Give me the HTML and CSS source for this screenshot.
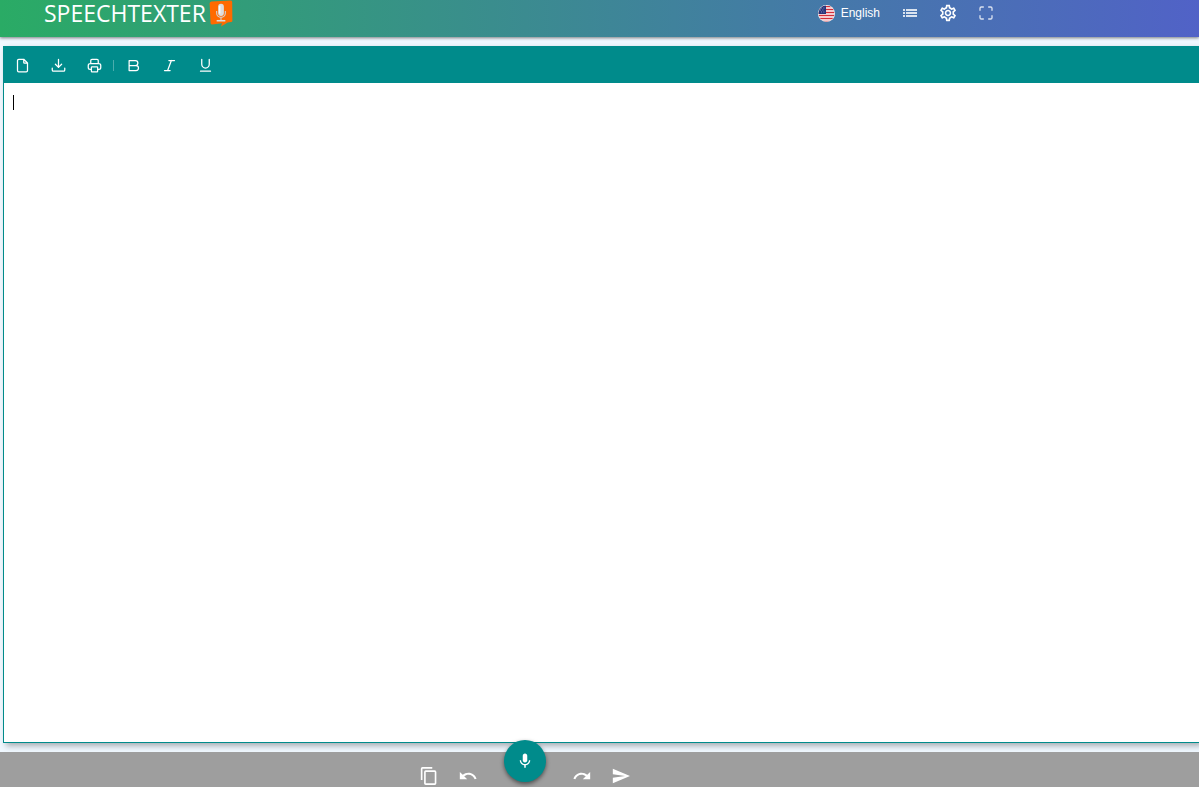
FILE: index.html
```html
<!DOCTYPE html>
<html lang="en">
<head>
  <meta charset="UTF-8" />
  <meta name="viewport" content="width=device-width, initial-scale=1.0"/>
  <title>SpeechTexter</title>
  <link rel="stylesheet" href="styles.css">
</head>
<body>
  <header class="header">
    <a class="logo" href="#">
      <span>SPEECHTEXTER</span>
      <svg class="logo-mark" viewBox="0 0 24 28" aria-hidden="true">
        <path d="M2 1.500 22 .6Q23.500.6 23.600 2L23.800 21.500Q23.800 22.700 22.500 22.900L19 23.400 12 27.600 13 24.200 3 25.300Q1.300 25.300 1.200 24L.2 3.500Q.2 1.800 2 1.500Z" fill="#ff6a00"/>
        <path d="M7.500 11.500v2a4.500 4.500 0 0 0 9 0v-2M12 18v3" fill="none" stroke="#d5cfcb" stroke-width="1.200"/>
        <rect x="9" y="4" width="6" height="12.500" rx="3" fill="#ddd"/>
        <path d="M10.700 6v8" stroke="#fff" stroke-width="1.200"/>
        <path d="M7.500 21.500h9" stroke="#ddd" stroke-width="1.600"/>
      </svg>
    </a>
    <nav class="nav">
      <button class="language" type="button">
        <svg width="17" height="17" viewBox="0 0 17 17" aria-hidden="true">
          <clipPath id="flag"><circle cx="8.500" cy="8.500" r="8"/></clipPath>
          <circle cx="8.500" cy="8.500" r="8.500" fill="#fff"/>
          <g clip-path="url(#flag)">
            <path d="M0 1.500h17M0 4.500h17M0 7.500h17M0 10.500h17M0 13.500h17M0 16.500h17" stroke="#d32f3a" stroke-width="1.300"/>
            <path d="M0 0h8v9H0z" fill="#27357a"/>
            <path d="M3 3h.8M5.500 3h.8M2 5h.8M4.500 5h.8M3 7h.8M5.500 7h.8" stroke="#b7c0e2" stroke-width=".8"/>
          </g>
        </svg>
        <span>English</span>
      </button>
      <button class="nav-button list" type="button" aria-label="Commands">
        <svg width="14" height="8" viewBox="0 0 14 8" fill="#fff"><path d="M0 0h2v2H0zM3 0h11v2H3zM0 3h2v2H0zM3 3h11v2H3zM0 6h2v2H0zM3 6h11v2H3z"/></svg>
      </button>
      <button class="nav-button" type="button" aria-label="Settings">
        <svg width="18" height="18" viewBox="1 1 22 22" fill="#fff">
          <path d="M19.430 12.980c.04-.32.070-.64.070-.98 0-.34-.03-.66-.07-.98l2.110-1.650c.19-.15.240-.42.120-.64l-2-3.460c-.09-.16-.26-.25-.44-.25-.06 0-.12.010-.17.030l-2.490 1c-.52-.4-1.080-.73-1.690-.98l-.38-2.650C14.460 2.180 14.250 2 14 2h-4c-.25 0-.46.180-.49.420l-.38 2.650c-.61.250-1.170.590-1.690.980l-2.490-1c-.06-.02-.12-.03-.18-.03-.17 0-.34.090-.43.250l-2 3.460c-.13.220-.07.490.120.640l2.110 1.650c-.04.320-.07.650-.07.980 0 .33.030.66.070.980l-2.110 1.650c-.19.150-.24.420-.12.640l2 3.460c.09.160.26.250.44.250.06 0 .12-.01.17-.03l2.490-1c.52.400 1.080.730 1.690.980l.38 2.650c.03.240.24.420.49.420h4c.25 0 .46-.18.49-.42l.38-2.650c.61-.25 1.170-.59 1.690-.98l2.490 1c.06.020.12.030.18.030.17 0 .34-.09.430-.25l2-3.460c.12-.22.070-.49-.12-.64l-2.110-1.650zm-1.980-1.710c.04.310.050.520.050.730s-.02.430-.05.730l-.14 1.130.89.700 1.080.84-.7 1.210-1.270-.51-1.040-.42-.9.680c-.43.320-.84.560-1.250.730l-1.060.43-.16 1.130-.2 1.350h-1.400l-.19-1.350-.16-1.130-1.060-.43c-.43-.18-.83-.41-1.230-.71l-.91-.7-1.060.43-1.270.51-.7-1.210 1.080-.84.89-.7-.14-1.130c-.03-.31-.05-.54-.05-.74s.02-.43.050-.73l.14-1.130-.89-.7-1.080-.84.7-1.210 1.270.51 1.040.42.900-.68c.43-.32.840-.56 1.250-.73l1.060-.43.160-1.130.2-1.350h1.390l.19 1.350.16 1.130 1.060.43c.43.180.83.410 1.230.71l.91.700 1.060-.43 1.270-.51.700 1.210-1.070.85-.89.700.140 1.130zM12 8c-2.210 0-4 1.790-4 4s1.790 4 4 4 4-1.790 4-4-1.790-4-4-4zm0 6c-1.100 0-2-.9-2-2s.9-2 2-2 2 .9 2 2-.9 2-2 2z"/>
        </svg>
      </button>
      <button class="nav-button soft" type="button" aria-label="Full screen">
        <svg class="line" width="16" height="16" viewBox="0 0 24 24"><path d="M3 8V5a2 2 0 0 1 2-2h3M16 3h3a2 2 0 0 1 2 2v3M21 16v3a2 2 0 0 1-2 2h-3M8 21H5a2 2 0 0 1-2-2v-3"/></svg>
      </button>
    </nav>
  </header>

  <main class="editor">
    <div class="toolbar">
      <button class="tool" type="button" aria-label="New document">
        <svg class="line" width="15" height="15" viewBox="0 0 24 24"><path d="M14 2v5a1 1 0 0 0 1 1h5M18 22H6a2 2 0 0 1-2-2V4a2 2 0 0 1 2-2h8l6 6v12a2 2 0 0 1-2 2z"/></svg>
      </button>
      <button class="tool" type="button" aria-label="Download">
        <svg class="line" width="15" height="15" viewBox="0 0 24 24"><path d="M2 16v3a2 2 0 0 0 2 2h16a2 2 0 0 0 2-2v-3M7 10l5 5 5-5M12 2v13"/></svg>
      </button>
      <button class="tool" type="button" aria-label="Print">
        <svg class="line" width="15" height="15" viewBox="0 0 24 24"><path d="M17 18h2a3 3 0 0 0 3-3v-3a3 3 0 0 0-3-3H5a3 3 0 0 0-3 3v3a3 3 0 0 0 3 3h2M18 9V4a2 2 0 0 0-2-2H8a2 2 0 0 0-2 2v5"/><rect x="7" y="14" width="10" height="8" rx="1"/></svg>
      </button>
      <span class="divider"></span>
      <button class="tool" type="button" aria-label="Bold">
        <svg class="line" width="15" height="15" viewBox="0 0 24 24"><path d="M5 4h10a4 4 0 0 1 0 8H5zM5 12h11a4 4 0 0 1 0 8H5z"/></svg>
      </button>
      <button class="tool" type="button" aria-label="Italic">
        <svg class="line" width="15" height="15" viewBox="0 0 24 24"><path d="M11 4h9M4 20h9M15 4 9 20"/></svg>
      </button>
      <button class="tool" type="button" aria-label="Underline">
        <svg class="line" width="15" height="15" viewBox="0 0 24 24"><path d="M6 2v8a6 6 0 0 0 12 0V2M4 21h16"/></svg>
      </button>
    </div>
    <div class="page">
      <textarea class="text" aria-label="Text"></textarea>
      <span class="caret"></span>
    </div>
  </main>

  <footer class="footer">
    <div class="actions">
      <button class="action" type="button" aria-label="Copy">
        <svg width="18" height="18" viewBox="1 1 22 22" fill="#fff"><path d="M16 1H4a2 2 0 0 0-2 2v14h2V3h12V1zm3 4H8a2 2 0 0 0-2 2v14c0 1.100.9 2 2 2h11a2 2 0 0 0 2-2V7a2 2 0 0 0-2-2zm0 16H8V7h11v14z"/></svg>
      </button>
      <button class="action" type="button" aria-label="Undo">
        <svg width="18" height="18" viewBox="1 1 22 22" fill="#fff"><path d="M12.500 8c-2.650 0-5.050.99-6.900 2.600L2 7v9h9l-3.620-3.620c1.390-1.160 3.160-1.880 5.120-1.880 3.540 0 6.550 2.310 7.600 5.500l2.370-.78C21.080 11.030 17.150 8 12.500 8z"/></svg>
      </button>
      <span class="mic-space">
        <button class="mic" type="button" aria-label="Start dictation">
          <svg width="18" height="18" viewBox="0 0 24 24" fill="#fff"><path d="M12 14c1.660 0 3-1.340 3-3V5c0-1.660-1.340-3-3-3S9 3.340 9 5v6c0 1.660 1.340 3 3 3zm5.300-3c0 3-2.540 5.100-5.300 5.100S6.700 14 6.700 11H5c0 3.410 2.720 6.230 6 6.720V21h2v-3.280c3.280-.48 6-3.300 6-6.720h-1.700z"/></svg>
        </button>
      </span>
      <button class="action" type="button" aria-label="Redo">
        <svg width="18" height="18" viewBox="1 1 22 22" fill="#fff"><path d="M18.400 10.600C16.550 8.990 14.150 8 11.500 8c-4.650 0-8.580 3.030-9.960 7.220L3.900 16c1.050-3.190 4.050-5.500 7.600-5.500 1.950 0 3.730.72 5.120 1.880L13 16h9V7l-3.600 3.600z"/></svg>
      </button>
      <button class="action" type="button" aria-label="Send">
        <svg width="18" height="18" viewBox="1 1 22 22" fill="#fff"><path d="M2 21 23 12 2 3v7l15 2-15 2z"/></svg>
      </button>
    </div>
  </footer>
</body>
</html>
```
FILE: styles.css
```css
* { box-sizing: border-box; }
body { margin: 0; height: 100vh; display: flex; flex-direction: column; overflow: hidden; background: #f0f8ff; font-family: "Liberation Sans", Arial, sans-serif; }
button { display: flex; align-items: center; justify-content: center; padding: 0; border: none; background: none; color: white; cursor: pointer; }
svg { display: block; }
.line { fill: none; stroke: white; stroke-width: 2; stroke-linecap: round; stroke-linejoin: round; }

.header { display: flex; align-items: flex-start; justify-content: space-between; padding: 0 194px 10px 44px; background: linear-gradient(to right, #2aab65, #5162c7); box-shadow: 0 1px 3px rgba(0,0,0,0.5); }
.logo { display: flex; align-items: center; gap: 3px; color: white; text-decoration: none; font-family: "Open Sans", sans-serif; font-size: 23px; line-height: 27px; }
.logo-mark { width: 24px; height: 27px; }
.nav { display: flex; align-items: center; height: 26px; }
.language { gap: 6px; margin-right: 11px; font-family: inherit; font-size: 12px; }
.nav-button { width: 38px; height: 26px; }
.list svg, .soft svg { opacity: 0.8; }

.editor { flex: 1; display: flex; flex-direction: column; margin: 9px 0 9px 3px; border: 1px solid #008b8b; border-right: none; background: white; box-shadow: 3px 3px 6px rgba(0,0,0,0.3); }
.toolbar { display: flex; align-items: center; height: 36px; background: #008b8b; }
.tool { width: 36px; height: 36px; }
.divider { width: 1px; height: 11px; margin: 0 1px; background: #4badad; }
.page { flex: 1; display: flex; position: relative; }
.text { flex: 1; padding: 10px; border: none; outline: none; resize: none; background: none; font-family: inherit; font-size: 14px; }
.caret { position: absolute; left: 9px; top: 12px; width: 1px; height: 15px; background: black; }

.footer { display: flex; justify-content: center; height: 35px; padding: 6px 149px 0 0; background: #9e9e9e; }
.actions { display: flex; align-items: flex-start; }
.action { width: 39px; height: 36px; }
.mic-space { position: relative; width: 75px; }
.mic { position: absolute; left: 16px; top: -18px; width: 42px; height: 42px; border-radius: 50%; background: #008b8b; box-shadow: 0 2px 4px rgba(0,0,0,0.5); }
```
